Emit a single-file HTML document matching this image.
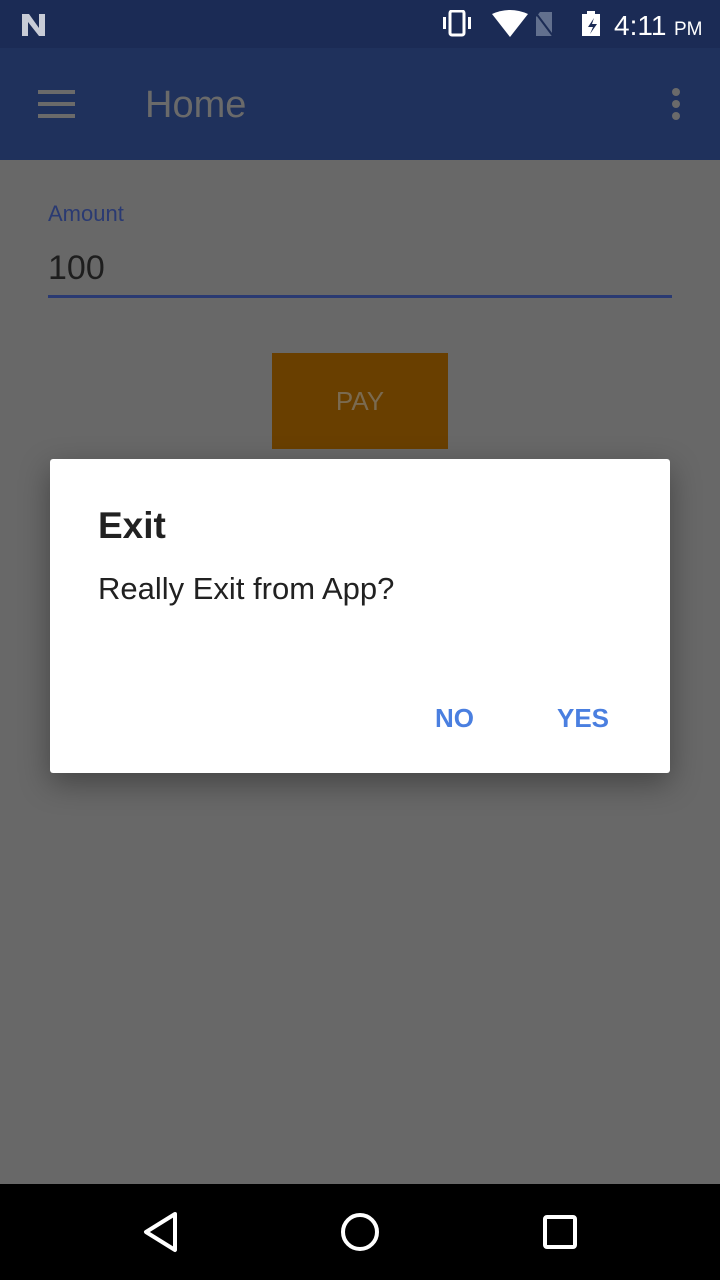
<!DOCTYPE html>
<html><head><style>
body{margin:0;width:720px;height:1280px;position:relative;overflow:hidden;background:#686868;font-family:"Liberation Sans",sans-serif}
.abs{position:absolute}
</style></head><body>
<div class="abs" style="left:0;top:0;width:720px;height:48px;background:#1b2b55"></div>
<div class="abs" style="left:0;top:48px;width:720px;height:112px;background:#1f315c"></div>
<svg class="abs" style="left:20px;top:12px" width="32" height="26"><path d="M2 2h7l10 14V2h6v22h-6L8 10v14H2z" fill="#c8ccd6"/></svg>
<svg class="abs" style="left:440px;top:10px" width="270" height="30">
<rect x="10" y="1" width="14" height="24" rx="2" fill="none" stroke="#fff" stroke-width="3"/>
<rect x="3" y="7" width="3" height="12" fill="#fff"/><rect x="28" y="7" width="3" height="12" fill="#fff"/>
<path d="M52 4q18-8 36 0l-18 23z" fill="#fff"/>
<path d="M100 2h12v24h-16v-19z" fill="#62708e"/><path d="M95 2l18 24" stroke="#1b2b55" stroke-width="2"/>
<rect x="142" y="4" width="18" height="22" fill="#fff"/><rect x="147" y="1" width="8" height="4" fill="#fff"/>
<path d="M154 8l-6 9h5l-3 7 7-10h-5z" fill="#1b2b55"/>
<text x="174" y="25" fill="#fff" font-size="28">4:11</text><text x="234" y="25" fill="#fff" font-size="19">PM</text>
</svg>
<div class="abs" style="left:38px;top:90px;width:37px;height:4px;background:#6a6a6a;box-shadow:0 12px 0 #6a6a6a,0 24px 0 #6a6a6a"></div>
<div class="abs" style="left:145px;top:84px;font-size:38px;color:#6a6a6a">Home</div>
<div class="abs" style="left:672px;top:88px;width:8px;height:8px;border-radius:4px;background:#6a6a6a;box-shadow:0 12px 0 #6a6a6a,0 24px 0 #6a6a6a"></div>
<div class="abs" style="left:48px;top:201px;font-size:22px;color:#2a3a72">Amount</div>
<div class="abs" style="left:48px;top:249px;font-size:34px;color:#1e1e1e">100</div>
<div class="abs" style="left:48px;top:295px;width:624px;height:3px;background:#2a3a72"></div>
<div class="abs" style="left:272px;top:353px;width:176px;height:96px;background:#693f00;color:#7a6a50;font-size:26px;text-align:center;line-height:96px">PAY</div>
<div class="abs" style="left:50px;top:459px;width:620px;height:314px;background:#fff;border-radius:3px;box-shadow:0 10px 30px rgba(0,0,0,.35)">
<div class="abs" style="left:48px;top:46px;font-size:37px;font-weight:bold;color:#212121">Exit</div>
<div class="abs" style="left:48px;top:112px;font-size:31px;color:#212121">Really Exit from App?</div>
<div class="abs" style="left:385px;top:244px;font-size:26px;font-weight:bold;color:#4a7fe0">NO</div>
<div class="abs" style="left:507px;top:244px;font-size:26px;font-weight:bold;color:#4a7fe0">YES</div>
</div>
<div class="abs" style="left:0;top:1184px;width:720px;height:96px;background:#000"></div>
<svg class="abs" style="left:0;top:1184px" width="720" height="96">
<path d="M175 30L146 48l29 18z" fill="none" stroke="#fff" stroke-width="4" stroke-linejoin="round"/>
<circle cx="360" cy="48" r="17" fill="none" stroke="#fff" stroke-width="4"/>
<rect x="545" y="33" width="30" height="30" rx="2" fill="none" stroke="#fff" stroke-width="4"/>
</svg>
</body></html>
